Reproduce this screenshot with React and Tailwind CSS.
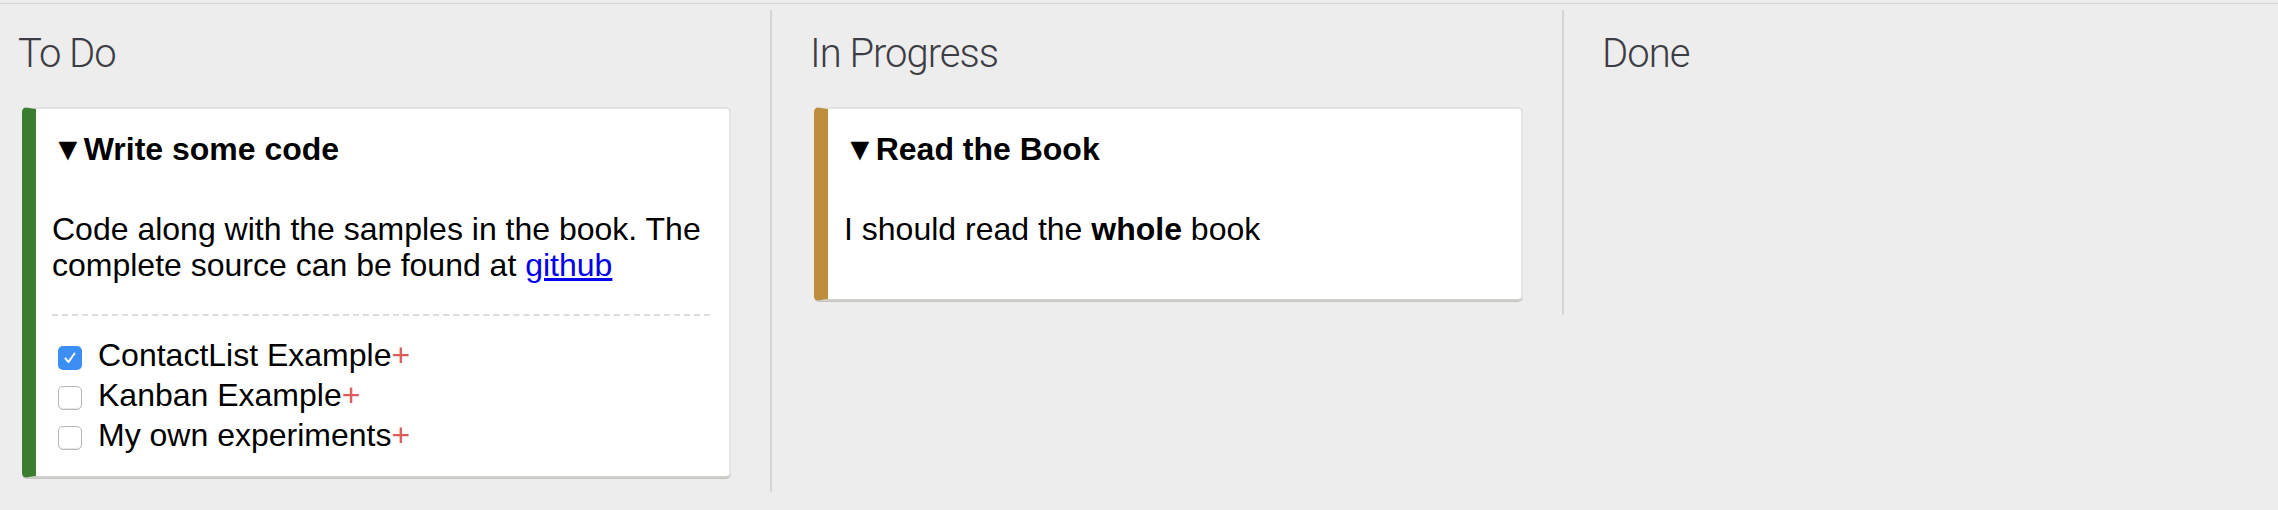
import { useState } from "react";

const cardsData = [
  {
    id: 1,
    status: "todo",
    title: "Write some code",
    color: "green",
    tasks: [
      { id: 1, name: "ContactList Example", done: true },
      { id: 2, name: "Kanban Example", done: false },
      { id: 3, name: "My own experiments", done: false },
    ],
  },
  {
    id: 2,
    status: "in-progress",
    title: "Read the Book",
    color: "tan",
    tasks: [],
  },
];

const Checkbox = ({ checked, onClick }) => (
  <span
    onClick={onClick}
    className={
      checked
        ? "flex-none mt-[11px] ml-[6px] mr-[16px] w-[24px] h-[24px] rounded-[5px] bg-[#3b8ef3] flex items-center justify-center cursor-pointer"
        : "flex-none mt-[11px] ml-[6px] mr-[16px] w-[24px] h-[24px] rounded-[5px] bg-white border border-[#b9b9b9] shadow-[inset_0_-1px_1px_#e6e6e6] cursor-pointer"
    }
  >
    {checked && (
      <svg width="14" height="14" viewBox="0 0 14 14" fill="none">
        <path d="M2.5 7.5 L5.5 11 L11.5 2.5" stroke="white" strokeWidth="2" strokeLinecap="round" strokeLinejoin="round" />
      </svg>
    )}
  </span>
);

const CheckList = ({ tasks }) => {
  const [items, setItems] = useState(tasks);

  const toggle = (id) => {
    setItems(items.map((t) => (t.id === id ? { ...t, done: !t.done } : t)));
  };

  if (!items.length) return <div className="mt-[31px]" />;

  return (
    <ul className="mt-[31px] border-t-2 border-dashed border-[#dcdcdc] pt-[19px]">
      {items.map((task) => (
        <li key={task.id} className="flex items-start text-[32px] leading-[40px]">
          <Checkbox checked={task.done} onClick={() => toggle(task.id)} />
          <span>
            {task.name}
            <span className="text-[#dd5b5b] cursor-pointer">+</span>
          </span>
        </li>
      ))}
    </ul>
  );
};

const Card = ({ card, children }) => {
  const bar = card.color === "green" ? "border-l-[#3b7c2f]" : "border-l-[#be8d3d]";

  return (
    <div
      className={`w-[709px] bg-white rounded-[5px] border-2 border-[#e3e3df] border-b-[#cfcfcb] border-l-[14px] ${bar} shadow-[0_1px_0_#c4c4c0] pt-[22px] pl-4 pr-[19px] pb-[21px]`}
    >
      <div className="text-[32px] leading-[36px] font-bold text-black">&#9660;{card.title}</div>
      <div className="mt-[44px] text-[32px] leading-[36px] text-black whitespace-nowrap">{children}</div>
      <CheckList tasks={card.tasks} />
    </div>
  );
};

const List = ({ title, cards, first, last }) => (
  <div
    className={
      (first ? "pl-[22px] " : "pl-[42px] ") +
      (last ? "flex-1 " : "flex-none border-r-2 border-[#d6d6d6] pr-[39px] ") +
      "pt-[20px] pb-[14px]"
    }
  >
    <h1 className="-ml-[4px] font-['Roboto',sans-serif] font-light text-[40px] leading-[48px] tracking-[-1px] text-[#3d3d45] mb-[29px]">
      {title}
    </h1>
    <div className="flex flex-col gap-4">{cards}</div>
  </div>
);

export default function App() {
  const todo = cardsData[0];
  const progress = cardsData[1];

  return (
    <div className="min-h-screen bg-[#ededed] pt-[3px] font-['Liberation_Sans',Arial,sans-serif]">
      <div className="border-t border-[#d4d4d4] pt-[6px] flex items-start overflow-hidden">
        <List
          first
          title="To Do"
          cards={
            <Card card={todo}>
              Code along with the samples in the book. The
              <br />
              complete source can be found at{" "}
              <a href="#" className="text-[#0000ee] underline">
                github
              </a>
            </Card>
          }
        />
        <List
          title="In Progress"
          cards={
            <Card card={progress}>
              I should read the <strong>whole</strong> book
            </Card>
          }
        />
        <List last title="Done" cards={null} />
      </div>
    </div>
  );
}
